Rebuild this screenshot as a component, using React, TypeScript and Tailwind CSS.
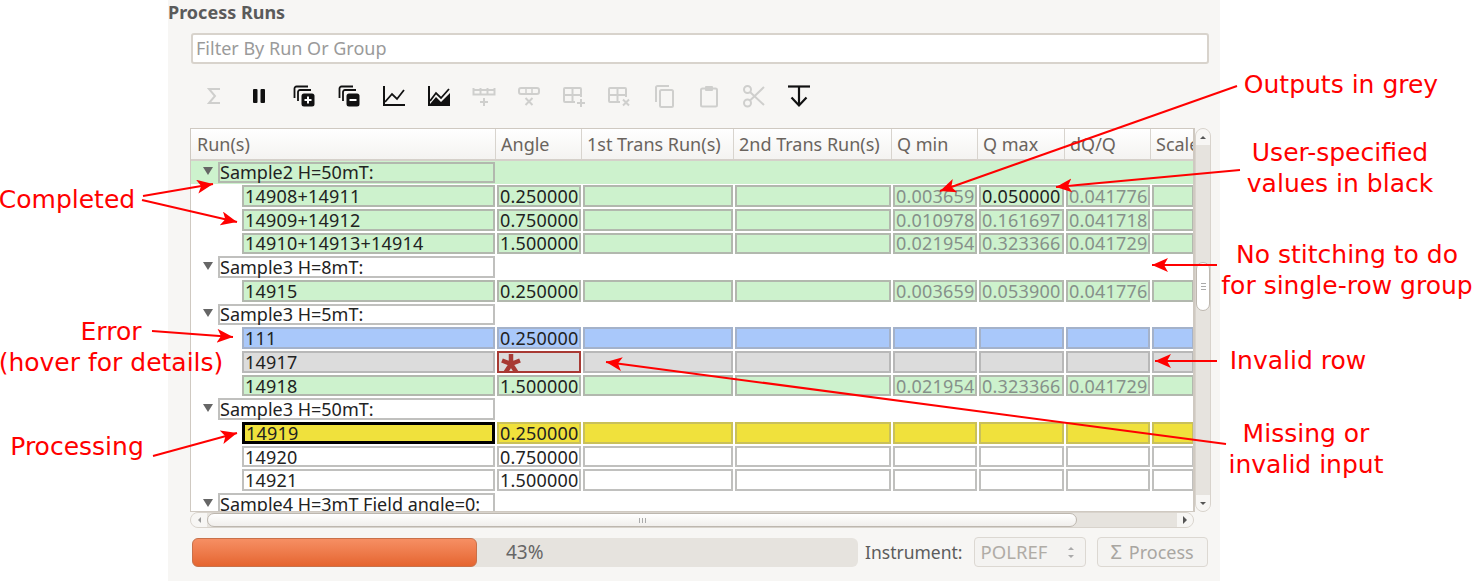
import type { ReactNode } from "react";

const cols = [86, 152, 158, 86, 87, 86, 44];

type Row = {
  run: string;
  kind: "group" | "run";
  tone: "green" | "white" | "blue" | "grey" | "yellow" | "none";
  rowFill?: boolean;
  angle?: string;
  outputs?: string[];
  userMax?: boolean;
};

const rows: Row[] = [
  { run: "Sample2 H=50mT:", kind: "group", tone: "green", rowFill: true },
  { run: "14908+14911", kind: "run", tone: "green", angle: "0.250000", outputs: ["0.003659", "0.050000", "0.041776"], userMax: true },
  { run: "14909+14912", kind: "run", tone: "green", angle: "0.750000", outputs: ["0.010978", "0.161697", "0.041718"] },
  { run: "14910+14913+14914", kind: "run", tone: "green", angle: "1.500000", outputs: ["0.021954", "0.323366", "0.041729"] },
  { run: "Sample3 H=8mT:", kind: "group", tone: "white" },
  { run: "14915", kind: "run", tone: "green", angle: "0.250000", outputs: ["0.003659", "0.053900", "0.041776"] },
  { run: "Sample3 H=5mT:", kind: "group", tone: "white" },
  { run: "111", kind: "run", tone: "blue", angle: "0.250000" },
  { run: "14917", kind: "run", tone: "grey" },
  { run: "14918", kind: "run", tone: "green", angle: "1.500000", outputs: ["0.021954", "0.323366", "0.041729"] },
  { run: "Sample3 H=50mT:", kind: "group", tone: "white" },
  { run: "14919", kind: "run", tone: "yellow", angle: "0.250000" },
  { run: "14920", kind: "run", tone: "white", angle: "0.750000" },
  { run: "14921", kind: "run", tone: "white", angle: "1.500000" },
  { run: "Sample4 H=3mT Field angle=0:", kind: "group", tone: "white" },
];

const toneClass = {
  green: "bg-[#cdf2cd] border-[#b2b8ae]",
  white: "bg-white border-[#c0c0be]",
  blue: "bg-[#a9c8fa] border-[#a4b2ca]",
  grey: "bg-[#dcdcdc] border-[#b8b8b8]",
  yellow: "bg-[#f0e13c] border-[#c9c05a]",
  none: "bg-transparent border-transparent",
};

function Cell({ tone, w, children, muted, error }: { tone: Row["tone"]; w: number; children?: ReactNode; muted?: boolean; error?: boolean }) {
  return (
    <div style={{ width: w }} className="shrink-0 h-full px-[1px] py-[1px]">
      <div
        className={`h-full border-2 pl-[1px] flex items-center leading-none tracking-[0.2px] overflow-hidden ${toneClass[tone]} ${
          muted ? "text-[#86908a]" : "text-[#222]"
        } ${error ? "border-[#a83a34]!" : ""}`}
      >
        {children}
      </div>
    </div>
  );
}

function TableRow({ row }: { row: Row }) {
  const { run, kind, tone, angle, outputs, userMax, rowFill } = row;
  const missing = run === "14917";
  return (
    <div className={`flex h-[23.7px] shrink-0 ${rowFill ? "bg-[#cdf2cd]" : ""}`}>
      <div className="w-[305px] shrink-0 h-full flex">
        {kind === "group" ? (
          <div className="w-[27px] shrink-0 flex items-center justify-center pl-[6px] pb-[2px]">
            <div className="w-0 h-0 border-l-[5px] border-r-[5px] border-t-[8px] border-l-transparent border-r-transparent border-t-[#666]" />
          </div>
        ) : (
          <div className="w-[51px] shrink-0" />
        )}
        <div className="flex-1 h-full py-[1px] pr-[1px]">
          <div
            className={`h-full flex items-center leading-none whitespace-nowrap text-[#222] ${
              kind === "run" ? "tracking-[0.2px] pl-[1px]" : ""
            } ${tone === "yellow" ? "border-[3px] border-black bg-[#f0e13c]" : `border-2 ${toneClass[tone]}`}`}
          >
            {run}
          </div>
        </div>
      </div>
      {kind === "run" && (
        <>
          <Cell tone={tone} w={cols[0]} error={missing}>
            {missing ? (
              <svg width="22" height="22" viewBox="0 0 22 22" className="shrink-0 self-start">
                <path d="M11 11V1M11 11L2 7.500M11 11L20 7.500M11 11L5.500 19.500M11 11L16.500 19.500" stroke="#a83a34" strokeWidth="4.500" fill="none" />
              </svg>
            ) : (
              angle
            )}
          </Cell>
          <Cell tone={tone} w={cols[1]} />
          <Cell tone={tone} w={cols[2]} />
          <Cell tone={tone} w={cols[3]} muted>{outputs?.[0]}</Cell>
          <Cell tone={tone} w={cols[4]} muted={!userMax}>{outputs?.[1]}</Cell>
          <Cell tone={tone} w={cols[5]} muted>{outputs?.[2]}</Cell>
          <Cell tone={tone} w={cols[6]} />
        </>
      )}
    </div>
  );
}

function Tb({ children, w = 24 }: { children: ReactNode; w?: number }) {
  return (
    <div style={{ width: 45 }} className="shrink-0 flex items-center justify-center h-[30px]">
      <svg width={w} height="24" viewBox="0 0 24 24" fill="none">
        {children}
      </svg>
    </div>
  );
}

const dim = "#cfcfcd";

function Toolbar() {
  return (
    <div className="flex h-[30px] mt-[17px] ml-[23px]">
      <Tb>
        <path d="M18 5H7l6 7-6 7h11" stroke={dim} strokeWidth="2" />
      </Tb>
      <Tb>
        <rect x="6" y="5" width="4.500" height="14" rx="1" fill="#111" />
        <rect x="13.500" y="5" width="4.500" height="14" rx="1" fill="#111" />
      </Tb>
      <Tb>
        <path d="M2.500 14V4.500a2 2 0 0 1 2-2H16" stroke="#111" strokeWidth="1.800" />
        <path d="M6 17V8a2 2 0 0 1 2-2h11" stroke="#111" strokeWidth="1.800" />
        <rect x="9.500" y="9.500" width="13" height="13" rx="2.500" fill="#111" />
        <path d="M12.500 16h7M16 12.500v7" stroke="#fff" strokeWidth="2" />
      </Tb>
      <Tb>
        <path d="M2.500 14V4.500a2 2 0 0 1 2-2H16" stroke="#111" strokeWidth="1.800" />
        <path d="M6 17V8a2 2 0 0 1 2-2h11" stroke="#111" strokeWidth="1.800" />
        <rect x="9.500" y="9.500" width="13" height="13" rx="2.500" fill="#111" />
        <path d="M12.500 16h7" stroke="#fff" strokeWidth="2" />
      </Tb>
      <Tb>
        <path d="M2 2v19h21" stroke="#111" strokeWidth="2" />
        <path d="M3 18l7-8 5 5 7-9" stroke="#111" strokeWidth="1.800" />
      </Tb>
      <Tb>
        <path d="M2 2v19h21" stroke="#111" strokeWidth="2" />
        <path d="M3 17l6-8 5 5 8-9" stroke="#111" strokeWidth="1.800" />
        <path d="M3 21v-1l6-7 5 5 9-9v12z" fill="#111" />
      </Tb>
      <Tb>
        <path d="M1.500 4v6.500h21V4M8.500 4v6.500M15.500 4v6.500M1.500 6h21" stroke={dim} strokeWidth="2" />
        <path d="M12 14v8M8 18h8" stroke={dim} strokeWidth="2" />
      </Tb>
      <Tb>
        <rect x="2" y="4" width="20" height="6" rx="2" stroke={dim} strokeWidth="2" />
        <path d="M9 5v4M15 5v4" stroke={dim} strokeWidth="1.500" />
        <path d="M8.500 14l7 7M15.500 14l-7 7" stroke={dim} strokeWidth="2" />
      </Tb>
      <Tb>
        <path d="M19 13V5a1 1 0 0 0-1-1H3a1 1 0 0 0-1 1v12a1 1 0 0 0 1 1h10M2 11h17M10.500 4v14" stroke={dim} strokeWidth="2" />
        <path d="M19 15v8M15 19h8" stroke={dim} strokeWidth="2" />
      </Tb>
      <Tb>
        <path d="M19 13V5a1 1 0 0 0-1-1H3a1 1 0 0 0-1 1v12a1 1 0 0 0 1 1h10M2 11h17M10.500 4v14" stroke={dim} strokeWidth="2" />
        <path d="M16 15.500l6 6M22 15.500l-6 6" stroke={dim} strokeWidth="2" />
      </Tb>
      <Tb>
        <path d="M4 18V3.500a1.500 1.500 0 0 1 1.500-1.500H17" stroke={dim} strokeWidth="2" />
        <rect x="8" y="6" width="13" height="17" rx="1.500" stroke={dim} strokeWidth="2" />
      </Tb>
      <Tb>
        <path d="M8 4.500H5.500a1.500 1.500 0 0 0-1.500 1.500v15a1.500 1.500 0 0 0 1.500 1.500h13a1.500 1.500 0 0 0 1.500-1.500V6a1.500 1.500 0 0 0-1.500-1.500H16" stroke={dim} strokeWidth="2" />
        <rect x="8" y="2" width="8" height="5" rx="1" fill={dim} />
      </Tb>
      <Tb>
        <circle cx="5.500" cy="5.500" r="3.500" stroke={dim} strokeWidth="2" />
        <circle cx="5.500" cy="19" r="3.500" stroke={dim} strokeWidth="2" />
        <path d="M8 8l14 13M8 16.500L22 3" stroke={dim} strokeWidth="2" />
      </Tb>
      <Tb>
        <path d="M1 2.500h22" stroke="#111" strokeWidth="2.200" />
        <path d="M12 3v18M4.500 13.500l7.500 8 7.500-8" stroke="#111" strokeWidth="2.200" />
      </Tb>
    </div>
  );
}

function Arrows() {
  const lines = [
    [143, 196, 213, 184],
    [142, 200, 237, 222],
    [1237, 86, 940, 191],
    [1240, 170, 1056, 187],
    [1217, 265, 1152, 265],
    [152, 331, 233, 337],
    [1217, 361, 1155, 361],
    [1226, 444, 606, 362],
    [153, 456, 237, 433],
  ];
  return (
    <svg width="1472" height="581" className="absolute inset-0 pointer-events-none">
      <defs>
        <marker id="head" markerUnits="userSpaceOnUse" markerWidth="18" markerHeight="16" refX="16" refY="7" orient="auto">
          <path d="M0 0L16 7L0 14L4 7z" fill="#f00" />
        </marker>
      </defs>
      {lines.map(([x1, y1, x2, y2]) => (
        <line key={`${x1}-${y1}`} x1={x1} y1={y1} x2={x2} y2={y2} stroke="#f00" strokeWidth="2" markerEnd="url(#head)" />
      ))}
    </svg>
  );
}

function Note({ cx, y, children }: { cx: number; y: number; children: ReactNode }) {
  return (
    <div
      style={{ left: cx, top: y }}
      className="absolute -translate-x-1/2 -translate-y-1/2 whitespace-nowrap text-center text-[#f00] text-[25px] leading-[31px] font-['DejaVu_Sans',sans-serif]"
    >
      {children}
    </div>
  );
}

export default function App() {
  return (
    <div className="relative w-[1472px] h-[581px] bg-white overflow-hidden font-['Noto_Sans',sans-serif]">
      <div className="ml-[168px] w-[1052px] h-[581px] bg-[#f7f6f4] flex flex-col">
        <div className="h-[25px] flex items-center text-[18px] font-bold text-[#5b5b5b]">Process Runs</div>

        <div className="ml-[23px] mr-[11px] mt-[8px] h-[31px] border-2 border-[#d8d3cc] rounded-[3px] bg-white flex items-center pl-[3px] pb-[1px] text-[18px] text-[#9a9a9a]">
          Filter By Run Or Group
        </div>

        <Toolbar />

        <div className="flex ml-[22px] mt-[17px] h-[384px]">
          <div className="w-[1005px] h-full border border-[#cfc9c1] border-r-2 bg-white flex flex-col overflow-hidden text-[18px]">
            <div className="flex h-[31.500px] shrink-0 border-b-2 border-[#d5d0ca] bg-gradient-to-b from-white to-[#f4f3f1] text-[#6a645e]">
              <div className="w-[305px] shrink-0 border-r border-[#d8d4ce] pl-[6px] pt-[2px] flex items-center">Run(s)</div>
              {[
                ["Angle", cols[0]],
                ["1st Trans Run(s)", cols[1]],
                ["2nd Trans Run(s)", cols[2]],
                ["Q min", cols[3]],
                ["Q max", cols[4]],
                ["dQ/Q", cols[5]],
                ["Scale", cols[6]],
              ].map(([label, w]) => (
                <div key={label} style={{ width: w }} className="shrink-0 border-r border-[#d8d4ce] pl-[5px] pt-[2px] flex items-center overflow-hidden whitespace-nowrap">
                  {label}
                </div>
              ))}
            </div>
            {rows.map((row) => (
              <TableRow key={row.run} row={row} />
            ))}
          </div>

          <div className="w-[16px] h-full flex flex-col items-center border border-[#d8d3cc] rounded-full bg-[#e6e3de] overflow-hidden">
            <div className="h-[16px] w-full bg-[#f7f6f4] flex items-center justify-center shrink-0">
              <div className="w-0 h-0 border-l-[3px] border-r-[3px] border-b-[3px] border-l-transparent border-r-transparent border-b-[#555]" />
            </div>
            <div className="h-[117px] shrink-0" />
            <div className="h-[49px] w-full shrink-0 rounded-full border border-[#bdb7af] bg-white flex flex-col gap-[2px] items-center justify-center">
              <div className="h-px w-[5px] bg-[#aaa]" />
              <div className="h-px w-[5px] bg-[#aaa]" />
              <div className="h-px w-[5px] bg-[#aaa]" />
            </div>
            <div className="flex-1" />
            <div className="h-[16px] w-full bg-[#f7f6f4] flex items-center justify-center shrink-0">
              <div className="w-0 h-0 border-l-[3px] border-r-[3px] border-t-[3px] border-l-transparent border-r-transparent border-t-[#555]" />
            </div>
          </div>
        </div>

        <div className="ml-[22px] w-[1004px] h-[16px] flex items-center border border-[#d8d3cc] rounded-full bg-[#e6e3de] overflow-hidden">
          <div className="w-[16px] h-full shrink-0 bg-[#f7f6f4] flex items-center justify-center">
            <div className="w-0 h-0 border-t-[3px] border-b-[3px] border-r-[3px] border-t-transparent border-b-transparent border-r-[#999]" />
          </div>
          <div className="w-[870px] h-full shrink-0 rounded-full border border-[#bdb7af] bg-gradient-to-b from-white to-[#f1efec] flex items-center justify-center gap-[2px]">
            <div className="w-px h-[5px] bg-[#aaa]" />
            <div className="w-px h-[5px] bg-[#aaa]" />
            <div className="w-px h-[5px] bg-[#aaa]" />
          </div>
          <div className="flex-1" />
          <div className="w-[16px] h-full shrink-0 bg-[#f7f6f4] flex items-center justify-center">
            <div className="w-0 h-0 border-t-[4px] border-b-[4px] border-l-[4px] border-t-transparent border-b-transparent border-l-[#555]" />
          </div>
        </div>

        <div className="flex items-center ml-[24px] mt-[9px] h-[30px]">
          <div className="relative w-[666px] h-[29px] shrink-0 rounded-[6px] bg-[#e6e3de] flex items-center text-[19px] text-[#666]">
            <div className="w-[285px] h-full rounded-[6px] border border-[#c9714a] bg-gradient-to-b from-[#f68f63] to-[#e5652f]" />
            <span className="ml-[29px]">43%</span>
          </div>
          <span className="ml-[7px] text-[17.500px] text-[#5c5c5c] whitespace-nowrap">Instrument:</span>
          <div className="ml-[11px] w-[112px] h-[30px] border border-[#dcd8d2] rounded-[4px] bg-[#f4f3f1] flex items-center justify-between px-[6px] text-[18.500px] text-[#b0aca6]">
            POLREF
            <div className="flex flex-col gap-[5px] mr-[5px]">
              <div className="w-0 h-0 border-l-[3px] border-r-[3px] border-b-[3px] border-l-transparent border-r-transparent border-b-[#aaa]" />
              <div className="w-0 h-0 border-l-[3px] border-r-[3px] border-t-[3px] border-l-transparent border-r-transparent border-t-[#aaa]" />
            </div>
          </div>
          <div className="ml-[11px] w-[111px] h-[30px] border border-[#dcd8d2] rounded-[4px] bg-[#f4f3f1] flex items-center justify-center gap-[7px] text-[18px] text-[#a9a6a1]">
            <span className="text-[20px]">Σ</span>
            <span>Process</span>
          </div>
        </div>
      </div>

      <Arrows />

      <Note cx={67} y={199}>Completed</Note>
      <Note cx={111} y={331}>Error</Note>
      <Note cx={111} y={362}>(hover for details)</Note>
      <Note cx={77} y={446}>Processing</Note>
      <Note cx={1341} y={84}>Outputs in grey</Note>
      <Note cx={1340} y={168}>User-specified<br />values in black</Note>
      <Note cx={1347} y={270}>No stitching to do<br />for single-row group</Note>
      <Note cx={1298} y={360}>Invalid row</Note>
      <Note cx={1306} y={449}>Missing or<br />invalid input</Note>
    </div>
  );
}
